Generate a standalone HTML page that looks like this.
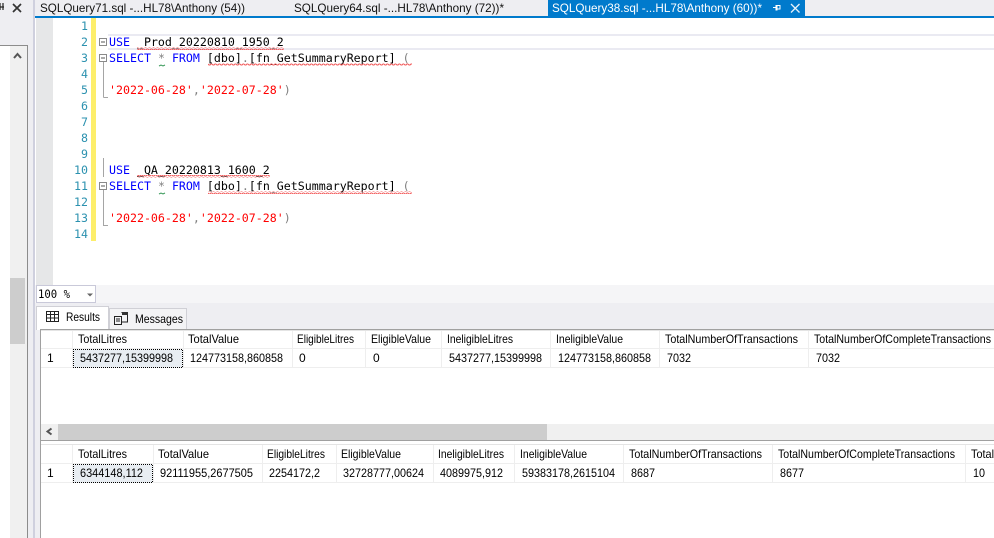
<!DOCTYPE html>
<html><head><meta charset="utf-8"><title>SSMS</title>
<style>
html,body{margin:0;padding:0;background:#fff;width:994px;height:538px;overflow:hidden}
svg{display:block}
.c{font-family:"DejaVu Sans Mono","Liberation Mono",monospace;font-size:11.62px;white-space:pre}
.n{fill:#2b91af;text-anchor:end}
.k{fill:#0000ff}.g{fill:#808080}.s{fill:#ff0000}.t{fill:#000}
.u{font-family:"Liberation Sans",sans-serif;font-size:12px;fill:#111}
.h{font-family:"Liberation Sans",sans-serif;font-size:12px;fill:#000}
.w{fill:none;stroke:#f25a5a;stroke-width:1.1}
.w2{fill:none;stroke:#3a9a5a;stroke-width:1}
</style></head><body>
<svg width="994" height="538" viewBox="0 0 994 538" xmlns="http://www.w3.org/2000/svg">
<defs>
<pattern id="wv" width="4" height="3" patternUnits="userSpaceOnUse"><path d="M0 1 L1 2 L2 2 L3 1 L4 1" class="w"/></pattern>
</defs>
<rect width="994" height="538" fill="#fff"/>
<!-- left panel -->
<rect x="0" y="0" width="35" height="538" fill="#eeeef2"/>
<rect x="0" y="46" width="27" height="492" fill="#fff"/>
<rect x="0" y="45" width="28" height="1" fill="#8c8c8c"/>
<rect x="27" y="45" width="1" height="493" fill="#8c8c8c"/>
<rect x="10" y="46" width="17" height="492" fill="#f0f0f0"/>
<rect x="10" y="278" width="15" height="66" fill="#cdcdcd"/>
<path d="M14 58 L17.500 54 L21 58" fill="none" stroke="#555" stroke-width="2"/>
<rect x="33" y="0" width="2" height="538" fill="#cfd0de"/>
<path d="M0 3 V10 M0 7 H4 M3 3 V10" stroke="#222" stroke-width="1.200" fill="none"/>
<path d="M13 4 L21 12 M21 4 L13 12" stroke="#333" stroke-width="1.700" fill="none"/>
<!-- tab strip -->
<rect x="35" y="0" width="959" height="16" fill="#eeeef2"/>
<rect x="35" y="16" width="959" height="2" fill="#007acc"/>
<rect x="548" y="0" width="257" height="18" fill="#007acc"/>
<text x="40" y="12" class="u" textLength="205" lengthAdjust="spacingAndGlyphs">SQLQuery71.sql -...HL78\Anthony (54))</text>
<text x="294" y="12" class="u" textLength="210" lengthAdjust="spacingAndGlyphs">SQLQuery64.sql -...HL78\Anthony (72))*</text>
<text x="552" y="12" class="u" style="fill:#fff" textLength="210" lengthAdjust="spacingAndGlyphs">SQLQuery38.sql -...HL78\Anthony (60))*</text>
<path d="M773 7.500 H776 M776 5 V10 H777 V5 M777 5.500 H780 V9 H777" stroke="#fff" stroke-width="1" fill="none"/>
<path d="M791 4 L799.500 12.500 M799.500 4 L791 12.500" stroke="#e8f2fa" stroke-width="1.300" fill="none"/>
<!-- editor gutter -->
<rect x="36" y="18" width="17" height="267" fill="#e6e7e8"/>
<rect x="91" y="18" width="5" height="223" fill="#fdee6a"/>
<rect x="108" y="34" width="886" height="2" fill="#eaeaf2"/>
<rect x="108" y="48" width="886" height="2" fill="#eaeaf2"/>
<g class="c">
<text class="c n" x="88" y="30">1</text>
<text class="c n" x="88" y="46">2</text>
<text class="c n" x="88" y="62">3</text>
<text class="c n" x="88" y="78">4</text>
<text class="c n" x="88" y="94">5</text>
<text class="c n" x="88" y="110">6</text>
<text class="c n" x="88" y="126">7</text>
<text class="c n" x="88" y="142">8</text>
<text class="c n" x="88" y="158">9</text>
<text class="c n" x="88" y="174">10</text>
<text class="c n" x="88" y="190">11</text>
<text class="c n" x="88" y="206">12</text>
<text class="c n" x="88" y="222">13</text>
<text class="c n" x="88" y="238">14</text>
</g>
<!-- outlining -->
<g fill="#fff" stroke="#8a8a8a" stroke-width="1">
<rect x="99.500" y="38.500" width="7" height="7"/>
<rect x="99.500" y="54.500" width="7" height="7"/>
<rect x="99.500" y="182.500" width="7" height="7"/>
</g>
<path d="M101 42 H105 M101 58 H105 M101 186 H105" stroke="#555"/>
<path d="M103.500 62 V97.500 M103.500 97.500 H108 M103.500 158 V177 M103.500 190 V225.500 H108" stroke="#a5a5a5" fill="none"/>
<!-- code -->
<text x="109" y="46" class="c t"><tspan class="k">USE</tspan> _Prod_20220810_1950_2</text>
<rect x="137" y="47" width="147" height="3" fill="url(#wv)"/>
<text x="109" y="62" class="c t"><tspan class="k">SELECT</tspan> <tspan class="g">*</tspan> <tspan class="k">FROM</tspan> [dbo]<tspan class="g">.</tspan>[fn_GetSummaryReport] <tspan class="g">(</tspan></text>
<rect x="208" y="63" width="204" height="3" fill="url(#wv)"/>
<path d="M159 66 L161 65 L163 66 L165 65" class="w2"/>
<text x="109" y="94" class="c s">'2022-06-28'<tspan class="g">,</tspan>'2022-07-28'<tspan class="g">)</tspan></text>
<text x="109" y="174" class="c t"><tspan class="k">USE</tspan> _QA_20220813_1600_2</text>
<rect x="137" y="175" width="133" height="3" fill="url(#wv)"/>
<text x="109" y="190" class="c t"><tspan class="k">SELECT</tspan> <tspan class="g">*</tspan> <tspan class="k">FROM</tspan> [dbo]<tspan class="g">.</tspan>[fn_GetSummaryReport] <tspan class="g">(</tspan></text>
<rect x="208" y="191" width="204" height="3" fill="url(#wv)"/>
<path d="M159 194 L161 193 L163 194 L165 193" class="w2"/>
<text x="109" y="222" class="c s">'2022-06-28'<tspan class="g">,</tspan>'2022-07-28'<tspan class="g">)</tspan></text>
<!-- zoom bar -->
<rect x="35" y="285" width="959" height="18" fill="#f5f5f7"/>
<rect x="36.500" y="285.500" width="59" height="17" fill="#fff" stroke="#c9c9d9"/>
<text x="38" y="298" class="c t" style="font-size:11.62px" textLength="32" lengthAdjust="spacingAndGlyphs">100 %</text>
<path d="M87 293.500 H93 L90 296.500 Z" fill="#666"/>
<!-- results tabs -->
<rect x="35" y="303" width="959" height="27" fill="#eeeef2"/>
<rect x="36.500" y="306.500" width="72" height="24" fill="#fff" stroke="#d0d0d6"/>
<rect x="109.500" y="308.500" width="77" height="21" fill="#f3f3f5" stroke="#d0d0d6"/>
<g fill="none" stroke="#222" stroke-width="1">
<rect x="46.500" y="311.500" width="12" height="10"/>
<path d="M46.500 314.500 H58.500 M46.500 318 H58.500 M50.500 311.500 V321.500 M54.500 311.500 V321.500"/>
<path d="M114.500 316.500 H121.500 V324.500 H114.500 Z M116 319 H120 M116 321 H120"/>
<path d="M121.500 312.500 H127.500 V322 H122"/>
</g>
<rect x="122" y="312" width="6" height="3" fill="#333"/>
<text x="66" y="321" class="h" textLength="34" lengthAdjust="spacingAndGlyphs">Results</text>
<text x="135" y="323" class="h" textLength="48" lengthAdjust="spacingAndGlyphs">Messages</text>
<!-- grid frame -->
<rect x="35" y="330" width="5" height="208" fill="#eeeef2"/>
<rect x="40" y="329" width="954" height="1" fill="#a0a0a0"/>
<rect x="40" y="329" width="1" height="209" fill="#a0a0a0"/>
<!-- grid 1 lines -->
<rect x="41" y="330" width="953" height="1" fill="#e4e4e4"/>
<rect x="41" y="348" width="953" height="1" fill="#eeeeee"/>
<rect x="41" y="367" width="953" height="1" fill="#eeeeee"/>
<g fill="#eeeeee">
<rect x="72" y="331" width="1" height="37"/><rect x="183" y="331" width="1" height="37"/><rect x="292" y="331" width="1" height="37"/><rect x="365" y="331" width="1" height="37"/><rect x="441" y="331" width="1" height="37"/><rect x="550" y="331" width="1" height="37"/><rect x="659" y="331" width="1" height="37"/><rect x="808" y="331" width="1" height="37"/>
</g>
<rect x="73.500" y="349.500" width="109" height="18" fill="#e8edf2" stroke="#000" stroke-dasharray="1 1" stroke-dashoffset="0.5"/>
<g class="h">
<text class="h" x="78" y="343" textLength="49" lengthAdjust="spacingAndGlyphs">TotalLitres</text>
<text class="h" x="188" y="343" textLength="51" lengthAdjust="spacingAndGlyphs">TotalValue</text>
<text class="h" x="297" y="343" textLength="57" lengthAdjust="spacingAndGlyphs">EligibleLitres</text>
<text class="h" x="371" y="343" textLength="60" lengthAdjust="spacingAndGlyphs">EligibleValue</text>
<text class="h" x="447" y="343" textLength="66" lengthAdjust="spacingAndGlyphs">IneligibleLitres</text>
<text class="h" x="556" y="343" textLength="67" lengthAdjust="spacingAndGlyphs">IneligibleValue</text>
<text class="h" x="665" y="343" textLength="133" lengthAdjust="spacingAndGlyphs">TotalNumberOfTransactions</text>
<text class="h" x="814" y="343" textLength="177" lengthAdjust="spacingAndGlyphs">TotalNumberOfCompleteTransactions</text>
<text class="h" x="47" y="362">1</text>
<text class="h" x="80" y="362" textLength="93" lengthAdjust="spacingAndGlyphs">5437277,15399998</text>
<text class="h" x="190" y="362" textLength="93" lengthAdjust="spacingAndGlyphs">124773158,860858</text>
<text class="h" x="299" y="362">0</text>
<text class="h" x="373" y="362">0</text>
<text class="h" x="449" y="362" textLength="93" lengthAdjust="spacingAndGlyphs">5437277,15399998</text>
<text class="h" x="558" y="362" textLength="93" lengthAdjust="spacingAndGlyphs">124773158,860858</text>
<text class="h" x="667" y="362" textLength="24" lengthAdjust="spacingAndGlyphs">7032</text>
<text class="h" x="816" y="362" textLength="24" lengthAdjust="spacingAndGlyphs">7032</text>
</g>
<!-- scrollbar -->
<rect x="41" y="424" width="953" height="16" fill="#f0f0f0"/>
<rect x="58" y="424" width="489" height="16" fill="#cdcdcd"/>
<path d="M51.500 428.500 L47.500 431.500 L51.500 434.500" fill="none" stroke="#555" stroke-width="2"/>
<rect x="41" y="440" width="953" height="1" fill="#a0a0a0"/>
<!-- grid 2 lines -->
<rect x="41" y="444" width="953" height="1" fill="#e4e4e4"/>
<rect x="41" y="463" width="953" height="1" fill="#eeeeee"/>
<rect x="41" y="482" width="953" height="1" fill="#eeeeee"/>
<g fill="#eeeeee">
<rect x="72" y="445" width="1" height="38"/><rect x="153" y="445" width="1" height="38"/><rect x="262" y="445" width="1" height="38"/><rect x="336" y="445" width="1" height="38"/><rect x="433" y="445" width="1" height="38"/><rect x="514" y="445" width="1" height="38"/><rect x="623" y="445" width="1" height="38"/><rect x="772" y="445" width="1" height="38"/><rect x="965" y="445" width="1" height="38"/>
</g>
<rect x="73.500" y="464.500" width="79" height="18" fill="#e8edf2" stroke="#000" stroke-dasharray="1 1" stroke-dashoffset="0.5"/>
<g class="h">
<text class="h" x="78" y="458" textLength="49" lengthAdjust="spacingAndGlyphs">TotalLitres</text>
<text class="h" x="158" y="458" textLength="51" lengthAdjust="spacingAndGlyphs">TotalValue</text>
<text class="h" x="267" y="458" textLength="58" lengthAdjust="spacingAndGlyphs">EligibleLitres</text>
<text class="h" x="341" y="458" textLength="60" lengthAdjust="spacingAndGlyphs">EligibleValue</text>
<text class="h" x="438" y="458" textLength="66" lengthAdjust="spacingAndGlyphs">IneligibleLitres</text>
<text class="h" x="520" y="458" textLength="67" lengthAdjust="spacingAndGlyphs">IneligibleValue</text>
<text class="h" x="629" y="458" textLength="133" lengthAdjust="spacingAndGlyphs">TotalNumberOfTransactions</text>
<text class="h" x="778" y="458" textLength="177" lengthAdjust="spacingAndGlyphs">TotalNumberOfCompleteTransactions</text>
<text class="h" x="971" y="458" textLength="23" lengthAdjust="spacingAndGlyphs">Total</text>
<text class="h" x="47" y="477">1</text>
<text class="h" x="80" y="477" textLength="63" lengthAdjust="spacingAndGlyphs">6344148,112</text>
<text class="h" x="160" y="477" textLength="93" lengthAdjust="spacingAndGlyphs">92111955,2677505</text>
<text class="h" x="269" y="477" textLength="51" lengthAdjust="spacingAndGlyphs">2254172,2</text>
<text class="h" x="343" y="477" textLength="81" lengthAdjust="spacingAndGlyphs">32728777,00624</text>
<text class="h" x="440" y="477" textLength="63" lengthAdjust="spacingAndGlyphs">4089975,912</text>
<text class="h" x="522" y="477" textLength="93" lengthAdjust="spacingAndGlyphs">59383178,2615104</text>
<text class="h" x="631" y="477" textLength="24" lengthAdjust="spacingAndGlyphs">8687</text>
<text class="h" x="780" y="477" textLength="24" lengthAdjust="spacingAndGlyphs">8677</text>
<text class="h" x="973" y="477" textLength="12" lengthAdjust="spacingAndGlyphs">10</text>
</g>
</svg>
</body></html>
